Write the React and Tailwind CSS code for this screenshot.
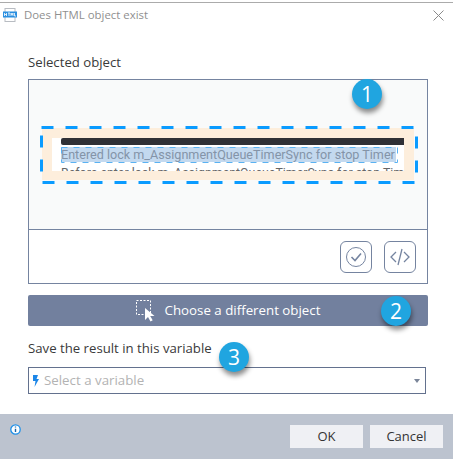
const font = { fontFamily: '"Open Sans","Noto Sans",sans-serif' };

function Badge({ n, className }) {
  return (
    <div className={"absolute flex h-[30px] w-[30px] items-center justify-center rounded-full bg-[#20a5e0] text-[21px] leading-none text-white shadow-[1px_4px_5px_rgba(0,0,0,0.45)] " + className}>
      {n}
    </div>
  );
}

export default function App() {
  return (
    <div style={font} className="relative flex h-[459px] w-[453px] flex-col overflow-hidden bg-white text-[#333]">
      <div className="mt-[2px] h-px bg-[#ababab]" />
      <div className="flex h-[24px] items-center pl-[3px] pr-[9px]">
        <svg width="14" height="14" viewBox="0 0 14 14" className="mr-[7px]">
          <rect x="2" y="0.5" width="10" height="13" fill="#fff" stroke="#b8bcc2" />
          <rect x="0" y="3.5" width="14" height="6" fill="#2b8fe0" />
          <path d="M1.5 5v3M3.5 5v3M1.5 6.5h2M5 5h2M6 5v3M8 8V5l1 2 1-2v3M11.5 5v3h1.5" stroke="#fff" strokeWidth="0.8" fill="none" />
        </svg>
        <span className="text-[11.400px] text-[#8f8f8f]">Does HTML object exist</span>
        <svg width="11" height="11" viewBox="0 0 11 11" className="ml-auto">
          <path d="M0.5 0.5l10 10M10.5 0.5l-10 10" stroke="#8a8a8a" strokeWidth="1" />
        </svg>
      </div>

      <div className="flex flex-1 flex-col pl-[28px] pr-[25px]">
        <div className="mt-[26px] h-[26px] text-[13.200px] leading-[19px] text-[#3a3a3a]">Selected object</div>

        <div className="relative flex h-[205px] flex-col border border-[#7584a0]">
          <div className="relative h-[149px] overflow-hidden bg-[#f9fafa]">
            <div className="ml-[13px] mr-[13px] mt-[48px] h-[52px] bg-[#fdeedc] px-[10px] pt-[10px]">
              <div className="h-[33px] overflow-hidden bg-white pl-[9px]">
                <div className="h-[7px] rounded-l-[2px] bg-[#2f3035]" />
                <div style={{ fontFamily: 'Roboto,sans-serif' }} className="mt-[2px] mr-[8px] h-[15px] overflow-hidden whitespace-nowrap bg-[#c3d9ef] text-[12.600px] leading-[15px] text-[#8494a8]">
                  Entered lock m_AssignmentQueueTimerSync for stop Timer
                </div>
                <div style={{ fontFamily: 'Roboto,sans-serif' }} className="mt-[4px] whitespace-nowrap text-[12.400px] leading-[14px] text-[#666]">
                  Before enter lock m_AssignmentQueueTimerSync for stop Timer
                </div>
              </div>
            </div>
            <svg width="398" height="149" viewBox="0 0 398 149" className="absolute left-0 top-0" fill="none">
              <rect x="12.500" y="47.500" width="375" height="55" stroke="#0a9bff" strokeWidth="3" strokeDasharray="12 12" />
              <rect x="32.500" y="67.500" width="336" height="15" stroke="#5ab2f2" strokeWidth="1" strokeDasharray="6 6" />
            </svg>
          </div>
          <div className="flex flex-1 items-center justify-end gap-[12px] border-t border-[#7584a0] pr-[11px] pt-px">
            <div className="flex h-[32px] w-[32px] items-center justify-center rounded-[6px] border border-[#7584a0]">
              <svg width="22" height="22" viewBox="0 0 22 22" fill="none" stroke="#7584a0">
                <circle cx="11" cy="11" r="9.500" />
                <path d="M6.500 11l3.500 3.500 6-7" strokeWidth="1.600" />
              </svg>
            </div>
            <div className="flex h-[32px] w-[32px] items-center justify-center rounded-[6px] border border-[#7584a0]">
              <svg width="22" height="20" viewBox="0 0 22 20" fill="none" stroke="#7584a0" strokeWidth="1.300">
                <path d="M7 5l-5 5 5 5M15 5l5 5-5 5M13 2l-4 16" />
              </svg>
            </div>
          </div>
        </div>

        <div className="mt-[11px] flex h-[31px] items-center justify-center rounded-[2px] bg-[#72809e] text-white">
          <svg width="21" height="22" viewBox="0 0 21 22" className="mr-[8px]">
            <rect x="0.500" y="0.500" width="14" height="14" fill="none" stroke="#fff" strokeDasharray="2 1.500" />
            <path d="M9 8v12l3-3 2.500 4.500 2.200-1.200-2.500-4.300h4.300z" fill="#fff" />
          </svg>
          <span className="text-[13.300px]">Choose a different object</span>
        </div>

        <div className="mt-[12px] h-[29px] text-[13.200px] leading-[20px] text-[#3a3a3a]">Save the result in this variable</div>

        <div className="mr-[2px] flex h-[27px] items-center border border-[#63718e] pl-[3px] pr-[5px]">
          <svg width="8" height="12" viewBox="0 0 8 12" className="mr-[4px]">
            <path d="M1 0h5L4.500 4H7L2.500 12l1-6H1z" fill="#1c86e8" />
          </svg>
          <span className="text-[13.300px] text-[#b3b3b3]">Select a variable</span>
          <div className="ml-auto h-0 w-0 border-x-[3px] border-t-[4px] border-x-transparent border-t-[#7a8599]" />
        </div>
      </div>

      <div className="flex h-[45px] items-start bg-[#bcc3cf] pl-[10px] pr-[10px] pt-[11px]">
        <svg width="11" height="11" viewBox="0 0 11 11" className="mt-[-1px]">
          <circle cx="5.500" cy="5.500" r="4.700" fill="#fff" stroke="#1c8fe8" strokeWidth="1.300" />
          <path d="M5.500 2.500v1M5.500 4.800v3.200" stroke="#1763a8" strokeWidth="1.400" />
        </svg>
        <div className="ml-auto flex gap-[7px] text-[13px] text-[#333]">
          <div className="flex h-[23px] w-[73px] items-center justify-center bg-[#eff0f4]">OK</div>
          <div className="flex h-[23px] w-[73px] items-center justify-center bg-[#eff0f4]">Cancel</div>
        </div>
      </div>

      <Badge n="1" className="left-[352px] top-[79px]" />
      <Badge n="2" className="left-[381px] top-[296px]" />
      <Badge n="3" className="left-[219px] top-[342px]" />
    </div>
  );
}
